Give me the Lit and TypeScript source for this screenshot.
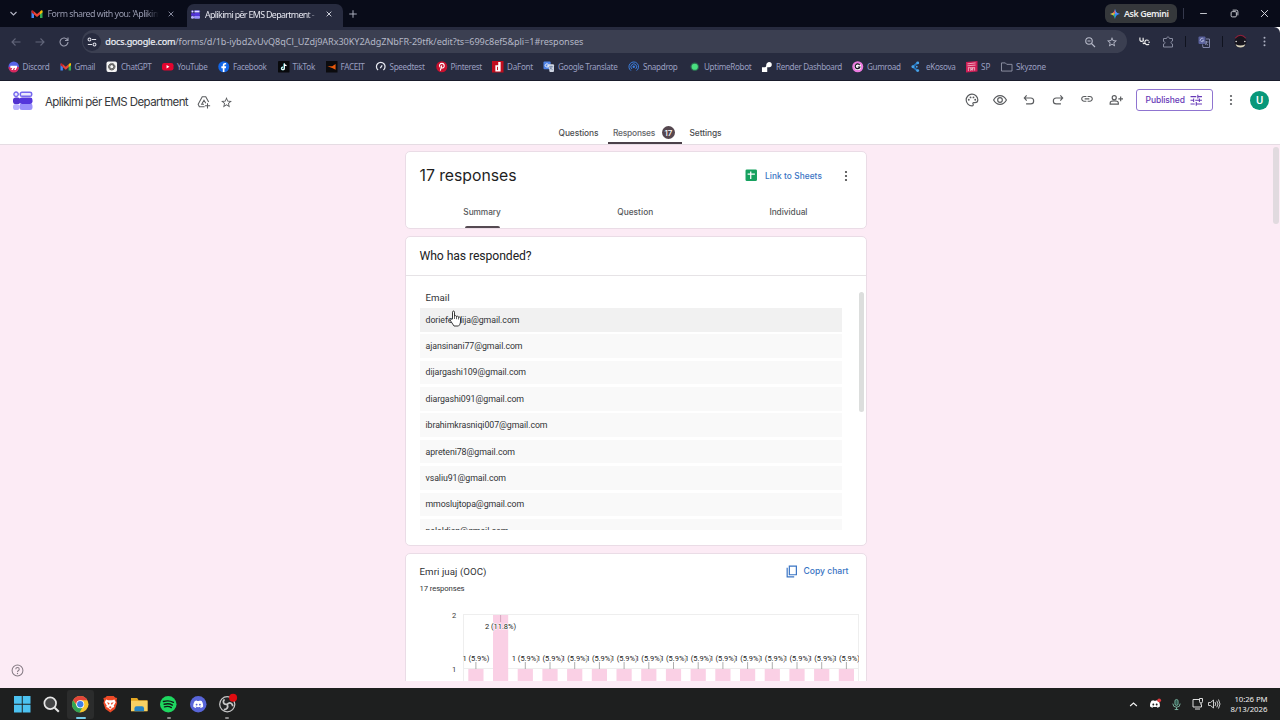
import { LitElement, html, svg, css } from "lit";
import { customElement, property } from "lit/decorators.js";

/** A single-line label whose tracking is adjusted so that it fills a given width. */
@customElement("fit-label")
class FitLabel extends LitElement {
  @property({ type: Number }) w = 0;
  @property() text = "";
  static styles = css`
    :host { display: inline-block; white-space: pre; flex: none; }
    .t { display: inline-block; }
  `;
  render() {
    return html`<span class="t">${this.text}</span>`;
  }
  updated() {
    const el = this.renderRoot.querySelector<HTMLElement>(".t")!;
    el.style.letterSpacing = "0px";
    const natural = el.getBoundingClientRect().width;
    el.style.letterSpacing = `${(this.w - natural) / this.text.length}px`;
  }
}

const t = (text: string, w: number, cls = "") => html`<fit-label class=${cls} .text=${text} .w=${w}></fit-label>`;

const icon = (size: number, body: unknown, box = "0 0 24 24", cls = "") =>
  html`<svg class="ic ${cls}" width=${size} height=${size} viewBox=${box} fill="currentColor">${body}</svg>`;

const gmail = svg`<path fill="#4285f4" d="M1 20h5V9L1 5z"/><path fill="#34a853" d="M18 20h5V5l-5 4z"/><path fill="#c5221f" d="M1 6v3l5 4V7L4 5C2.500 4 1 4.500 1 6z"/><path fill="#ea4335" d="M6 7l6 5 6-5v6l-6 5-6-5z"/><path fill="#fbbc04" d="M18 7v6l5-4V6c0-2-2-2-3-1z"/>`;
const forms = svg`<g><rect x="9" y="1.500" width="14" height="5" rx="2" fill="#eceafd" stroke="#7669ee" stroke-width="1.900"/><circle cx="3.800" cy="4" r="2.700" fill="#eceafd" stroke="#7669ee" stroke-width="1.700"/><rect x="0" y="16" width="8" height="7.500" rx="3.500" fill="#b9b2ff"/><rect x="8" y="15" width="16" height="8.500" rx="3" fill="#9a90fb"/><rect x="0" y="8" width="9" height="8" rx="3.500" fill="#5232cf"/><rect x="8" y="8" width="16" height="8" rx="3" fill="#5436dc"/></g>`;
const star = svg`<path d="M22 9.240l-7.190-.62L12 2 9.190 8.630 2 9.240l5.460 4.730L5.820 21 12 17.270 18.180 21l-1.630-7.030L22 9.240zM12 15.400l-3.760 2.270 1-4.280-3.320-2.880 4.380-.38L12 6.100l1.710 4.040 4.380.38-3.320 2.880 1 4.280L12 15.400z"/>`;
const more = svg`<circle cx="12" cy="4" r="2.200"/><circle cx="12" cy="12" r="2.200"/><circle cx="12" cy="20" r="2.200"/>`;
const close = svg`<path d="M5 5l14 14M19 5L5 19" stroke="currentColor" stroke-width="2.600" fill="none"/>`;
const discordFace = svg`<path d="M20.300 4.400A19.800 19.800 0 0 0 15.400 3l-.6 1.300a18 18 0 0 0-5.600 0L8.600 3a19.700 19.700 0 0 0-4.900 1.400C.5 9-.3 13.600.1 18.100A20 20 0 0 0 6.100 21l1.300-2c-.7-.3-1.300-.6-1.900-1l.4-.3c3.900 1.800 8.200 1.800 12.100 0l.4.300c-.6.4-1.200.7-1.900 1l1.300 2a19.900 19.900 0 0 0 6-2.900c.5-5.200-.8-9.700-3.500-13.700zM8 15.300c-1.200 0-2.200-1.100-2.200-2.400S6.800 10.500 8 10.500s2.200 1.100 2.200 2.400-1 2.400-2.200 2.400zm8 0c-1.200 0-2.200-1.100-2.200-2.400s1-2.400 2.200-2.400 2.200 1.100 2.200 2.400-1 2.400-2.200 2.400z"/>`;
const translate = svg`<rect x="1" y="1" width="15" height="16" rx="2" fill="#4f83e6"/><path d="M10 7h11a2 2 0 0 1 2 2v12a2 2 0 0 1-2 2h-7z" fill="#cfd5e2"/><path d="M11 7.500A3.400 3.400 0 1 0 11.500 10H8.500" fill="none" stroke="#fff" stroke-width="1.700"/><path d="M13 12h8M17 10v2c0 3-2 5-3 6M15 14c1 2 3 3 5 4" fill="none" stroke="#5d7196" stroke-width="1.500"/>`;

interface Mark { name: string; w: number; step: number; art: unknown; }
const marks: Mark[] = [
  { name: "Discord", w: 27, step: 52, art: svg`<circle cx="12" cy="12" r="11" fill="#5763e8"/><path d="M1 13a11 11 0 0 0 22 0c-7-2-15-3-22 0z" fill="#d7285e"/><path d="M5 10h14v3l-3 6h-3l2-5-3 1-2 4H7l2-5-4 1z" fill="#fff"/>` },
  { name: "Gmail", w: 20.5, step: 46.5, art: gmail },
  { name: "ChatGPT", w: 30.5, step: 56, art: svg`<rect x="1" y="1" width="22" height="22" rx="4" fill="#f4f4f4"/><g fill="none" stroke="#444" stroke-width="1.400"><rect x="8" y="5" width="8" height="14" rx="4"/><rect x="8" y="5" width="8" height="14" rx="4" transform="rotate(60 12 12)"/><rect x="8" y="5" width="8" height="14" rx="4" transform="rotate(120 12 12)"/></g>` },
  { name: "YouTube", w: 30.5, step: 56, art: svg`<rect x="0" y="4" width="24" height="16" rx="5" fill="#e3042f"/><path d="M9.500 8.500v7l6-3.500z" fill="#fff"/>` },
  { name: "Facebook", w: 33.5, step: 59.5, art: svg`<circle cx="12" cy="12" r="11.500" fill="#1266e8"/><path d="M10 23v-8H7v-4h3V8.500C10 5.500 12 4 14.500 4H17v3.500h-1.500c-1.500 0-2 .7-2 2V11H17l-.6 4h-2.900v8z" fill="#fff"/>` },
  { name: "TikTok", w: 22.5, step: 48, art: svg`<rect width="24" height="24" rx="1" fill="#08090c"/><path d="M12.500 5v10.500a2.800 2.800 0 1 1-2.800-2.800" stroke="#39d4d6" stroke-width="2.400" fill="none"/><path d="M13.300 5v10.500a2.800 2.800 0 1 1-2.800-2.800M13.500 6c.5 2 2 3.500 4.500 3.700" stroke="#fff" stroke-width="2.200" fill="none"/>` },
  { name: "FACEIT", w: 24, step: 49, art: svg`<rect width="24" height="24" fill="#0b0b0e"/><path d="M20 6v12l-6-3-11-4h10z" fill="#e8590c"/>` },
  { name: "Speedtest", w: 35, step: 61, art: svg`<path d="M6.500 19a9 9 0 1 1 11 0M11 15l4-6" fill="none" stroke="#e6e8f0" stroke-width="2.600"/>` },
  { name: "Pinterest", w: 31.5, step: 56.5, art: svg`<circle cx="12" cy="12" r="11.500" fill="#c8102e"/><path d="M9 20l3-11M8.500 13C5.500 9 8.500 5 12.500 5c6 0 6 9.500 1 9.500-1.500 0-2.300-.8-2.600-1.500" fill="none" stroke="#fff" stroke-width="2.300"/>` },
  { name: "DaFont", w: 26, step: 51, art: svg`<rect width="24" height="24" fill="#c00d1e"/><path d="M7 9h6V2h5v20H7z" fill="#fff"/><path d="M11.500 12v7" stroke="#c00d1e" stroke-width="2"/>` },
  { name: "Google Translate", w: 59.5, step: 85, art: translate },
  { name: "Snapdrop", w: 34.5, step: 61, art: svg`<g fill="none" stroke="#3c7fe0" stroke-width="2"><path d="M6 20a10 10 0 1 1 12 0"/><path d="M8 16.500a6 6 0 1 1 8 0"/></g><circle cx="12" cy="12" r="2.500" fill="#3c7fe0"/>` },
  { name: "UptimeRobot", w: 47.5, step: 72, art: svg`<circle cx="12" cy="12" r="9" fill="#2b6b50"/><circle cx="12" cy="12" r="6.500" fill="#4ae080"/>` },
  { name: "Render Dashboard", w: 66, step: 91, art: svg`<path d="M2 23V13h6c3 0 3-3 3-5 0-3 3-6 6-6a5.500 5.500 0 0 1 0 11h-4v10z" fill="#fff"/>` },
  { name: "Gumroad", w: 33.5, step: 59, art: svg`<circle cx="12" cy="12" r="11.500" fill="#ec7be0"/><circle cx="12" cy="12" r="7" fill="#fff"/><path d="M16 8.500a5 5 0 1 0 .5 4H12" fill="none" stroke="#171020" stroke-width="2.500"/>` },
  { name: "eKosova", w: 29.5, step: 55, art: svg`<path d="M14 3L4 12l10 9" fill="none" stroke="#2273bd" stroke-width="4"/><g fill="#4aa3e8"><circle cx="14" cy="4" r="3"/><circle cx="4" cy="12" r="3"/><circle cx="14" cy="20" r="3"/><circle cx="12" cy="12" r="2"/></g>` },
  { name: "SP", w: 9.5, step: 35, art: svg`<path d="M0 2l24-2v22l-24 2z" fill="#cf1d56"/><path d="M3 6l17-2M3 10l17-1.500M4 14h15M5 14v7M10 14v6l4-6v6M18 14v6" stroke="#f5bccb" stroke-width="1.700"/>` },
  { name: "Skyzone", w: 30, step: 60, art: svg`<path d="M1 4h8l3 3h11v14H1z" fill="none" stroke="#989caf" stroke-width="1.800"/>` },
];

const emails: [string, number][] = [
  ["doriefendija@gmail.com", 94], ["ajansinani77@gmail.com", 97], ["dijargashi109@gmail.com", 100.5],
  ["diargashi091@gmail.com", 98.5], ["ibrahimkrasniqi007@gmail.com", 122], ["apreteni78@gmail.com", 89.5],
  ["vsaliu91@gmail.com", 80.5], ["mmoslujtopa@gmail.com", 98.5], ["pelaldian@gmail.com", 83],
];

@customElement("app-root")
class AppRoot extends LitElement {
  static styles = css`
    :host { display: flex; flex-direction: column; width: 1280px; height: 720px; overflow: hidden; position: relative; font-family: Roboto, sans-serif; color: #202124; }
    * { box-sizing: border-box; }
    .ic { display: block; flex: none; overflow: visible; }

    .strip { height: 27px; background: #090c19; display: flex; align-items: center; font: 8.9px "Noto Sans", sans-serif; color: #989bb0; flex: none; }
    .chev { margin: 0 13px 0 9px; }
    .tab1 { display: flex; align-items: center; width: 157px; gap: 4.500px; }
    .fade { width: 112px; overflow: hidden; -webkit-mask-image: linear-gradient(90deg, #000 88%, transparent 99%); }
    .tab1 .x { margin-left: 3px; }
    .tab2 { display: flex; align-items: center; align-self: flex-end; background: #272b3f; height: 23px; width: 156px; border-radius: 7px 7px 0 0; padding: 0 0 3px 4.500px; gap: 5px; color: #e6e7f0; margin-left: -1.500px; }
    .tab2 .fade { width: 115px; }
    .plus { margin-left: 5px; color: #b1b4c2; }
    .gem { display: flex; align-items: center; gap: 4px; margin-left: auto; width: 72px; height: 19px; border-radius: 6px; background: #35383b; padding-left: 5px; font-weight: 600; color: #eceded; }
    .bar { width: 1px; height: 11px; background: #35394c; }
    .strip .bar { margin-left: 6px; }
    .win { display: flex; align-items: center; gap: 21.500px; margin: 0 11px 0 15px; color: #d7d9e0; }

    .tools { height: 29px; background: #272b3f; display: flex; align-items: center; flex: none; color: #aeb1c2; border-radius: 0 6px 0 0; }
    .nav { display: flex; gap: 12px; padding-left: 9.500px; width: 82px; color: #62667a; flex: none; }
    .nav .live { color: #9b9eb0; }
    .omni { width: 1045px; height: 22.500px; background: #3b3f51; border-radius: 12px; display: flex; align-items: center; flex: none; font: 9.1px "Noto Sans", sans-serif; color: #b4b7c6; }
    .site { width: 18px; height: 18px; border-radius: 9px; background: #272b3f; display: grid; place-items: center; margin: 0 4.300px 0 1px; color: #e0e2ea; }
    .host { color: #eceef5; -webkit-text-stroke: .2px #eceef5; }
    .zoomed { margin-left: auto; margin-right: 9.500px; display: flex; gap: 10px; color: #b9bccb; }
    .ext { display: flex; align-items: center; flex: 1; justify-content: space-between; padding: 0 10px 0 12px; }
    .ext .bar { background: #10131f; }

    .marks { height: 24.500px; background: #272b3f; border-bottom: 1px solid #191c2b; display: flex; align-items: center; padding: 0 0 2px 7.500px; font: 8.1px "Noto Sans", sans-serif; color: #9a9fc0; flex: none; }
    .mark { display: flex; align-items: center; gap: 3.500px; flex: none; }

    .head { background: #fff; height: 64px; border-bottom: 1px solid #e5dce3; flex: none; display: flex; flex-direction: column; justify-content: space-between; }
    .top { display: flex; align-items: center; height: 39px; padding-left: 12.500px; color: #5a5c5f; }
    .forms { margin-top: 2px; }
    .title { font: 11.5px Inter, sans-serif; color: #37393c; margin: 3px 9px 0 13px; }
    .top .s { margin: 4px 8.500px 0 0; }
    .acts { margin-left: auto; display: flex; align-items: center; gap: 14.800px; }
    .pub { display: flex; align-items: center; gap: 5px; width: 77px; height: 22px; margin: 0 12.500px 0 13px; border: 1px solid #8f74d0; border-radius: 3px; padding-left: 9px; color: #673ab7; font: 500 8.5px Inter, sans-serif; }
    .ava { width: 19px; height: 19px; border-radius: 50%; background: #07987a; color: #fff; display: grid; place-items: center; font: 500 11px Roboto, sans-serif; margin: 0 11px 0 13px; }
    .tabs { display: flex; justify-content: center; align-items: flex-end; font: 500 8.4px Inter, sans-serif; color: #4b4d50; height: 21px; }
    .tabs > * { height: 21px; display: flex; align-items: center; }
    .on { border-bottom: 2px solid #4b4049; width: 74px; margin: 0 8px 0 9px; padding: 1px 0 0 5.500px; gap: 7px; color: #626467; }
    .cnt { width: 13px; height: 13px; border-radius: 50%; background: #55474f; color: #fff; display: grid; place-items: center; font-size: 8px; }

    .page { flex: 1; min-height: 0; background: #fcebf5; display: flex; justify-content: space-between; }
    .left { width: 404.500px; display: flex; align-items: flex-end; padding: 0 0 11px 10.500px; color: #857b84; }
    .mid { width: 461.500px; height: 536px; overflow: hidden; padding-top: 6.500px; display: flex; flex-direction: column; gap: 7px; }
    .right { width: 413px; display: flex; justify-content: flex-end; padding: 2px 1px 0 0; }
    .thumb { width: 6px; height: 77px; border-radius: 3px; background: #e1dadf; }
    .card { background: #fff; border: 1px solid #eadce6; border-radius: 5px; flex: none; }
    .sum { height: 77.500px; display: flex; flex-direction: column; }
    .sumtop { display: flex; align-items: center; height: 47px; padding-left: 13.500px; color: #1f1f1f; }
    .big { font: 15.8px Inter, sans-serif; }
    .link { margin-left: auto; display: flex; align-items: center; gap: 8px; color: #3974c4; font: 500 8.3px Inter, sans-serif; }
    .sumtop .m { margin: 0 13.500px 0 18px; color: #444; }
    .subs { display: grid; grid-template-columns: 1fr 1fr 1fr; flex: 1; font: 500 8.3px Inter, sans-serif; color: #56585b; }
    .subs > div { display: flex; flex-direction: column; align-items: center; justify-content: space-between; padding: 8px 1px 0 0; }
    .ul { width: 35px; height: 2px; background: #554a52; border-radius: 2px 2px 0 0; }
    .who { height: 310px; }
    .whoh { height: 39px; border-bottom: 1px solid #e6e3e6; display: flex; align-items: center; padding-left: 13.500px; font: 12.2px Roboto, sans-serif; color: #202124; }
    .list { display: flex; justify-content: space-between; padding: 16px 1.500px 0 13.500px; }
    .rows { width: 422.500px; height: 238px; overflow: hidden; font: 8.8px Roboto, sans-serif; color: #323437; }
    .col { height: 16px; padding: 1px 0 0 6px; line-height: 10px; font-size: 9.700px; }
    .em { height: 23.600px; margin-bottom: 2.800px; background: #f9f9f9; display: flex; align-items: center; padding: 0 0 0 6px; }
    .em.hov { background: #f1f1f1; height: 24px; margin-bottom: 2.800px; }
    .sb { width: 5.500px; height: 120px; background: #dcdedd; border-radius: 3px; }
    .chart { height: 160px; border-bottom-left-radius: 0; border-bottom-right-radius: 0; }
    .ch { display: flex; justify-content: space-between; padding: 12px 17px 0 13.500px; font: 9.7px Roboto, sans-serif; color: #303235; height: 30px; }
    .copy { display: flex; gap: 6px; align-items: center; color: #3974c4; font: 500 8.6px Inter, sans-serif; height: 11px; }
    .n { display: block; font: 7.700px Roboto, sans-serif; padding-left: 13.500px; color: #303235; }
    .plot { display: block; margin-left: 38.500px; }
    .plot text { font: 7.500px Roboto, sans-serif; fill: #3a3a3a; }
    .plot .lb { text-anchor: middle; paint-order: stroke; stroke: #fff; stroke-width: 1.200px; fill: #222; }

    .task { height: 32.500px; background: #1e1f1f; flex: none; display: flex; align-items: center; color: #e6e6e6; padding: 1px 0 0 8.500px; }
    .app { width: 26.500px; height: 29px; margin-right: 2.900px; display: flex; flex-direction: column; align-items: center; justify-content: space-between; padding-top: 6px; border-radius: 3px; }
    .app.act { background: #2b2c2c; }
    .run { width: 4px; height: 2px; background: #8a8a8a; border-radius: 1px; }
    .act .run { width: 10px; background: #77cbe9; }
    .none { height: 2px; }
    .tray { margin-left: auto; display: flex; align-items: center; }
    .tray .a { margin-left: 12px; }
    .tray .b { margin-left: 11px; }
    .tray .c { margin-left: 10px; }
    .tray .d { margin-left: 4px; }
    .clock { width: 60px; padding-right: 12.500px; display: flex; flex-direction: column; align-items: flex-end; font: 7.8px/10.500px "Noto Sans", sans-serif; color: #eee; }
    .cursor { position: absolute; left: 449px; top: 310px; }
  `;

  private browser() {
    const a = (s: unknown) => icon(12, s);
    return html`
      <div class="strip">
        <span class="chev">${icon(9, svg`<path d="M4 8l8 8 8-8" fill="none" stroke="#b4b6c4" stroke-width="3"/>`)}</span>
        <div class="tab1">
          ${icon(12, gmail)}
          <div class="fade">${t("Form shared with you: 'Aplikimi", 115)}</div>
          <span class="x">${icon(8, close)}</span>
        </div>
        <div class="tab2">
          ${icon(9, forms)}
          <div class="fade">${t("Aplikimi për EMS Department -", 109)}</div>
          ${icon(8, close)}
        </div>
        <span class="plus">${icon(10, svg`<path d="M12 3v18M3 12h18" stroke="currentColor" stroke-width="2.300"/>`)}</span>
        <div class="gem">
          ${icon(10, svg`<path d="M12 0c1 7 5 11 12 12-7 1-11 5-12 12C11 17 7 13 0 12 7 11 11 7 12 0z" fill="#3186ff"/><path d="M12 0c1 7 5 11 12 12H12z" fill="#5a8df5"/><path d="M12 0c-.5 4-2 7-5 9l5 3z" fill="#f0564b"/><path d="M0 12c3-.4 5-1.300 7-3l5 3-5 3c-2-1.700-4-2.600-7-3z" fill="#e7bd2f"/><path d="M7 15c3 2 4.500 5 5 9v-12z" fill="#33b36b"/>`)}
          ${t("Ask Gemini", 44.5)}
        </div>
        <div class="bar"></div>
        <div class="win">
          ${icon(9, svg`<path d="M3 12h18" stroke="currentColor" stroke-width="2.400"/>`)}
          ${icon(9, svg`<g fill="none" stroke="currentColor" stroke-width="2.400"><rect x="3" y="7" width="14" height="14" rx="3"/><path d="M7 3h10a4 4 0 0 1 4 4v10"/></g>`)}
          ${icon(9, svg`<path d="M3 3l18 18M21 3L3 21" stroke="currentColor" stroke-width="2.600"/>`)}
        </div>
      </div>
      <div class="tools">
        <div class="nav">
          ${a(svg`<path d="M21 12H4M11 5l-7 7 7 7" fill="none" stroke="currentColor" stroke-width="2.200"/>`)}
          ${a(svg`<path d="M3 12h17M13 5l7 7-7 7" fill="none" stroke="currentColor" stroke-width="2.200"/>`)}
          <span class="live">${a(svg`<path d="M19 8a8 8 0 1 0 1 4M20 3v6h-6" fill="none" stroke="currentColor" stroke-width="2.200"/>`)}</span>
        </div>
        <div class="omni">
          <span class="site">${icon(10, svg`<g fill="none" stroke="currentColor" stroke-width="2.500"><circle cx="6" cy="6" r="3.500"/><path d="M12 6h10M2 18h10"/><circle cx="18" cy="18" r="3.500"/></g>`)}</span>
          ${t("docs.google.com", 70, "host")}${t("/forms/d/1b-iybd2vUvQ8qCl_UZdj9ARx30KY2AdgZNbFR-29tfk/edit?ts=699c8ef5&pli=1#responses", 408)}
          <span class="zoomed">
            ${a(svg`<g fill="none" stroke="currentColor" stroke-width="2.200"><circle cx="10" cy="10" r="6.500"/><path d="M15 15l7 7M7 10h6"/></g>`)}
            ${icon(12, star)}
          </span>
        </div>
        <div class="ext">
          ${icon(11, svg`<path d="M2 3v5c0 5 8 5 8 0M9 4v8M21 10c-5-3-9 0-8 5 1 4 5 5 9 3M9 14c0 4 3 3 4 1M22 12v3" fill="none" stroke="#eee" stroke-width="2.600"/>`)}
          ${a(svg`<path d="M3 5h6c0-4 6-4 6 0h6v5c-4 0-4 6 0 6v6H3v-6c4 0 4-5 0-5z" fill="none" stroke="#898da1" stroke-width="2"/>`)}
          <span class="bar"></span>
          ${a(svg`<rect x="1" y="1" width="14" height="15" rx="2" fill="#59609b"/><path d="M11 6A3.500 3.500 0 1 0 11.500 9H8.500" fill="none" stroke="#c3c8e6" stroke-width="1.500"/><path d="M16 6h7v17H10l-1-6M13 12h8M17 10v2c0 3-2 5-3 6M15 14c1 2 3 3 5 4" fill="none" stroke="#8b91b5" stroke-width="1.800"/>`)}
          <span class="bar"></span>
          ${icon(13, svg`<circle cx="12" cy="12" r="11" fill="#17151e"/><path d="M2 6Q12-5 22 6" fill="none" stroke="#94203a" stroke-width="2"/><path d="M3 17q9 5 18 0-2 6-9 6t-9-6z" fill="#d8d2bb"/><circle cx="4" cy="12" r="1.500" fill="#ddd"/><circle cx="20" cy="12" r="1.500" fill="#ddd"/>`)}
          ${icon(11, more)}
        </div>
      </div>
      <div class="marks">
        ${marks.map((m) => html`<div class="mark" style="width:${m.step}px">${icon(11.5, m.art)}${t(m.name, m.w)}</div>`)}
      </div>`;
  }

  private header() {
    return html`<div class="head">
      <div class="top">
        ${icon(19.5, forms, "0 0 24 24", "forms")}
        ${t("Aplikimi për EMS Department", 143, "title")}
        <span class="s">${icon(14, svg`<g fill="none" stroke="currentColor" stroke-width="1.800"><path d="M13 20H4l-2-4L9 3h6l5 9M18 14v9M13.500 18.500h9"/><path d="M12 16H8l4-7 3 5"/></g>`)}</span>
        <span class="s">${icon(13, star)}</span>
        <div class="acts">
          ${icon(14, svg`<path d="M12 22a10 10 0 1 1 10-10.500c0 3-2.500 5-5 5h-2c-1.500 0-2 1.500-1.200 2.500 1 1.200.2 3-1.800 3z" fill="none" stroke="currentColor" stroke-width="2"/><circle cx="6.500" cy="11.500" r="1.600"/><circle cx="9.500" cy="7.500" r="1.600"/><circle cx="14.500" cy="7.500" r="1.600"/><circle cx="17.500" cy="11.500" r="1.600"/>`)}
          ${icon(14, svg`<path d="M1 12q4-7.500 11-7.500T23 12q-4 7.500-11 7.500T1 12z" fill="none" stroke="currentColor" stroke-width="2"/><circle cx="12" cy="12" r="4" fill="none" stroke="currentColor" stroke-width="2"/>`)}
          ${icon(14, svg`<path d="M8 4L4 8.500 8 13M4 8.500h11a5 5 0 0 1 0 10H7" fill="none" stroke="currentColor" stroke-width="2"/>`)}
          ${icon(14, svg`<path d="M16 4l4 4.500-4 4.500M20 8.500H9a5 5 0 0 0 0 10h8" fill="none" stroke="currentColor" stroke-width="2"/>`)}
          ${icon(14, svg`<path transform="translate(0 -2)" d="M3.900 12c0-1.710 1.390-3.100 3.100-3.100h4V7H7c-2.760 0-5 2.240-5 5s2.240 5 5 5h4v-1.900H7c-1.710 0-3.100-1.390-3.100-3.100zM8 13h8v-2H8v2zm9-6h-4v1.900h4c1.710 0 3.100 1.390 3.100 3.100s-1.390 3.100-3.100 3.100h-4V17h4c2.760 0 5-2.240 5-5s-2.240-5-5-5z"/>`)}
          ${icon(14, svg`<g fill="none" stroke="currentColor" stroke-width="2"><circle cx="9" cy="8" r="3.500"/><path d="M2 19v-2c0-2 3-3.500 7-3.500s7 1.500 7 3.500v2zM20 6v8M16 10h8"/></g>`)}
        </div>
        <div class="pub">${t("Published", 39.5)}${icon(12.5, svg`<path d="M1 5h11M15 5h8M15 1.500v7M1 12h6M7 8.500v7M10 12h13M1 19h8M12 19h11M12 15.500v7M18 8.500v7" fill="none" stroke="currentColor" stroke-width="2"/>`)}</div>
        ${icon(12, more)}
        <div class="ava">U</div>
      </div>
      <div class="tabs">
        <div>${t("Questions", 40)}</div>
        <div class="on">${t("Responses", 42)}<span class="cnt">17</span></div>
        <div>${t("Settings", 32)}</div>
      </div>
    </div>`;
  }

  private chart() {
    const bars = Array.from({ length: 16 }, (_, i) => ({ x: 30.9 + i * 24.7, v: i === 1 ? 2 : 1 }));
    const y = (v: number) => 130 - v * 54;
    return html`<svg class="plot" width="414.500" height="91" viewBox="0 0 414.500 91">
      <text x="7" y="24.500">2</text><text x="7" y="78.500">1</text>
      <path d="M18 21.500H415M18.500 21V91M413.500 21V91M18 75.500H415" fill="none" stroke="#eeeeee"/>
      ${bars.map((b) => svg`<rect x=${b.x - 7.6} y=${y(b.v)} width="15.200" height=${91 - y(b.v)} fill="#fad0e5"/>`)}
      ${bars.map((b) => b.v === 2
        ? svg`<path d="M${b.x} 22v7" stroke="#c99ab2" stroke-width=".8"/><text class="lb" x=${b.x} y="36" textLength="31">2 (11.8%)</text>`
        : svg`<path d="M${b.x} 69v7" stroke="#999" stroke-width=".8"/><text class="lb" x=${b.x} y="68" textLength="27">1 (5.9%)</text>`)}
    </svg>`;
  }

  private page() {
    return html`<div class="page">
      <div class="left">${icon(13, svg`<g fill="none" stroke="currentColor" stroke-width="1.900"><circle cx="12" cy="12" r="10"/><path d="M8.800 9.500c0-4 6.400-4 6.400 0 0 2.500-3.200 2.500-3.200 5.200"/></g><circle cx="12" cy="17.500" r="1.200"/>`)}</div>
      <div class="mid">
        <div class="card sum">
          <div class="sumtop">
            ${t("17 responses", 97, "big")}
            <div class="link">${icon(12.5, svg`<rect x="1" y="1" width="22" height="22" rx="2.500" fill="#16a15f"/><path d="M11 5v14M5 10h14" stroke="#fff" stroke-width="2.400"/>`)}${t("Link to Sheets", 57)}</div>
            <span class="m">${icon(12, more)}</span>
          </div>
          <div class="subs">
            <div>${t("Summary", 37.5)}<span class="ul"></span></div>
            <div>${t("Question", 36)}</div>
            <div>${t("Individual", 38)}</div>
          </div>
        </div>
        <div class="card who">
          <div class="whoh">${t("Who has responded?", 112)}</div>
          <div class="list">
            <div class="rows">
              <div class="col">${t("Email", 24)}</div>
              ${emails.map(([e, w], i) => html`<div class="em ${i === 0 ? "hov" : ""}">${t(e, w)}</div>`)}
            </div>
            <div class="sb"></div>
          </div>
        </div>
        <div class="card chart">
          <div class="ch">${t("Emri juaj (OOC)", 67)}<div class="copy">${icon(13, svg`<path d="M8 2h13v16H8zM17 22H4V5" fill="none" stroke="currentColor" stroke-width="2.200"/>`)}${t("Copy chart", 45)}</div></div>
          <div class="n">${t("17 responses", 45)}</div>
          ${this.chart()}
        </div>
      </div>
      <div class="right"><div class="thumb"></div></div>
    </div>`;
  }

  private taskbar() {
    const app = (art: unknown, run = 0) => html`<div class="app ${run === 2 ? "act" : ""}">${icon(16.5, art)}<span class=${run ? "run" : "none"}></span></div>`;
    return html`<div class="task">
      ${app(svg`<path d="M0 0h11.300v11.300H0zM12.700 0H24v11.300H12.700zM0 12.700h11.300V24H0zM12.700 12.700H24V24H12.700z" fill="#4cc2f1"/>`)}
      ${app(svg`<circle cx="10.500" cy="10.500" r="8.500" fill="#454647" stroke="#e6e6e6" stroke-width="2.500"/><path d="M17 17l6 6" stroke="#e6e6e6" stroke-width="3"/>`)}
      ${app(svg`<circle cx="12" cy="12" r="12" fill="#f6c52d"/><path d="M1.600 6A12 12 0 0 1 22.400 6H12v12z" fill="#e2453a"/><path d="M1.600 6A12 12 0 0 0 11 24l5-9-9-1z" fill="#32a354"/><circle cx="12" cy="12" r="5.800" fill="#fff"/><circle cx="12" cy="12" r="4.600" fill="#3d7ee8"/>`, 2)}
      ${app(svg`<path d="M7 0h10l2 2 3 1-1 4 1 3-3 9-7 5-7-5-3-9 1-3-1-4 3-1z" fill="#ee4a27"/><path d="M6 5l3 1h6l3-1 2 4-3 5 1 2-3 1-3 3-3-3-3-1 1-2-3-5z" fill="#fff"/><path d="M7 9l4 1-1 3zM17 9l-4 1 1 3zM10 16l2-1 2 1-2 2z" fill="#ee4a27"/>`)}
      ${app(svg`<path d="M0 3h9l2 3h13v16H0z" fill="#e5a823"/><path d="M0 7h24v15H0z" fill="#f7d163"/><path d="M5 22v-4q0-3 3-3h8q3 0 3 3v4z" fill="#2584c5"/>`)}
      ${app(svg`<circle cx="12" cy="12" r="12" fill="#1ed760"/><path d="M5 8q8-2.500 14.500 1.300M6 12q7-2 12 1.200M6.500 15.700q6-1.500 10 1.100" fill="none" stroke="#111c15" stroke-width="2" stroke-linecap="round"/>`, 1)}
      ${app(svg`<circle cx="12" cy="12" r="12" fill="#5865d8"/><g transform="translate(4.800 4.800) scale(.6)" fill="#fff">${discordFace}</g>`)}
      ${app(svg`<circle cx="12" cy="12" r="11" fill="#232425" stroke="#c7c7c7" stroke-width="1.800"/><path d="M12 12c-6 1-7-4-4-7M12 12c4-4 8-1 8 3M12 12c2 5-1 8-5 8" fill="none" stroke="#c7c7c7" stroke-width="2.600"/><circle cx="20.500" cy="2.500" r="5.800" fill="#e00c10"/>`, 1)}
      <div class="tray">
        ${icon(9, svg`<path d="M3 16l9-8 9 8" fill="none" stroke="#f2f2f2" stroke-width="3"/>`)}
        <span class="a">${icon(10, svg`<g fill="#fff">${discordFace}</g><circle cx="22" cy="3" r="4.500" fill="#e23b40"/>`)}</span>
        <span class="b">${icon(11, svg`<rect x="8.500" y="1" width="7" height="13" rx="3.500" fill="#315b50" stroke="#80bba7" stroke-width="1.800"/><path d="M4 10q0 8 8 8t8-8M12 18v5M8 23h8" fill="none" stroke="#80bba7" stroke-width="2"/>`)}</span>
        <span class="c">${icon(12, svg`<path d="M15 3H2v15h17v-5M6 22h10M15 1v6q0 3 3 3t3-3V1zM18 10v4" fill="none" stroke="#dedede" stroke-width="2"/>`)}</span>
        <span class="d">${icon(12, svg`<path d="M1 9h4l6-5v16l-6-5H1zM14 8q3 4 0 8M17.500 5.500q5 6.500 0 13M21 3q6 9 0 18" fill="none" stroke="#dedede" stroke-width="1.800"/>`)}</span>
        <div class="clock">${t("10:26 PM", 33)}${t("8/13/2026", 37)}</div>
      </div>
    </div>`;
  }

  render() {
    return html`${this.browser()}${this.header()}${this.page()}${this.taskbar()}
      <svg class="cursor" width="13" height="17" viewBox="0 0 13 17"><path d="M3.500 9V2.200c0-1.600 2-1.600 2 0V6c1-.7 2-.3 2 .5 1-.6 2-.2 2 .7 1-.4 2 0 2 1V11c0 3-1 4-2 5H5c-1-2-3-4-4-6-.3-1 1-1.800 2-.5z" fill="#fff" stroke="#222" stroke-width=".9"/><path d="M5.500 6v3M7.500 6.500v2.700M9.500 7.200v2.300" stroke="#222" stroke-width=".7"/></svg>`;
  }
}
